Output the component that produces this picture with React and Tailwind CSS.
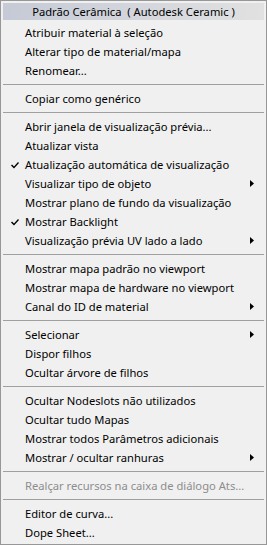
const groups = [
  [
    { label: "Atribuir material à seleção" },
    { label: "Alterar tipo de material/mapa" },
    { label: "Renomear..." },
  ],
  [{ label: "Copiar como genérico" }],
  [
    { label: "Abrir janela de visualização prévia..." },
    { label: "Atualizar vista" },
    { label: "Atualização automática de visualização", checked: true },
    { label: "Visualizar tipo de objeto", sub: true },
    { label: "Mostrar plano de fundo da visualização" },
    { label: "Mostrar Backlight", checked: true },
    { label: "Visualização prévia UV lado a lado", sub: true },
  ],
  [
    { label: "Mostrar mapa padrão no viewport" },
    { label: "Mostrar mapa de hardware no viewport" },
    { label: "Canal do ID de material", sub: true },
  ],
  [
    { label: "Selecionar", sub: true },
    { label: "Dispor filhos" },
    { label: "Ocultar árvore de filhos" },
  ],
  [
    { label: "Ocultar Nodeslots não utilizados" },
    { label: "Ocultar tudo Mapas" },
    { label: "Mostrar todos Parâmetros adicionais" },
    { label: "Mostrar / ocultar ranhuras", sub: true },
  ],
  [{ label: "Realçar recursos na caixa de diálogo Ats...", disabled: true }],
  [{ label: "Editor de curva..." }, { label: "Dope Sheet..." }],
];

function Check() {
  return (
    <svg width="8" height="7" viewBox="0 0 8 7" className="block">
      <path d="M0 3.5 L1 2.5 L3 4.5 L7 0 L8 1 L3 6.5 Z" fill="#000" />
    </svg>
  );
}

function Arrow() {
  return (
    <svg width="4" height="7" viewBox="0 0 4 7" className="block">
      <path d="M0 0 L4 3.5 L0 7 Z" fill="#000" />
    </svg>
  );
}

function Item({ label, checked, sub, disabled }) {
  return (
    <div className="relative flex h-[19px] items-center pl-[22px] pr-[10px]">
      {checked && (
        <span className="absolute left-[8px] top-[7px]">
          <Check />
        </span>
      )}
      <span className={`flex-1 whitespace-nowrap leading-none ${disabled ? "text-[#8d8d8d]" : "text-black"}`}>
        {label}
      </span>
      {sub && <Arrow />}
    </div>
  );
}

export default function App() {
  return (
    <div
      className="w-[267px] h-[545px] border border-[#979797] bg-[#f0f0f0] p-[2px] text-[11.2px]"
      style={{ fontFamily: '"Noto Sans", "Open Sans", sans-serif' }}
    >
      <div className="h-[20px] pb-[3px]">
        <div className="flex h-[17px] items-center justify-center bg-gradient-to-r from-[#c5cad6] to-[#e1e1e1] leading-none text-black whitespace-pre">
          Padrão Cerâmica  ( Autodesk Ceramic )
        </div>
      </div>
      {groups.map((g, i) => (
        <div key={i}>
          {i > 0 && (
            <div className="flex h-[9px] items-center">
              <div className="h-px w-full bg-[#a0a0a0]" />
            </div>
          )}
          {g.map((it) => (
            <Item key={it.label} {...it} />
          ))}
        </div>
      ))}
    </div>
  );
}
